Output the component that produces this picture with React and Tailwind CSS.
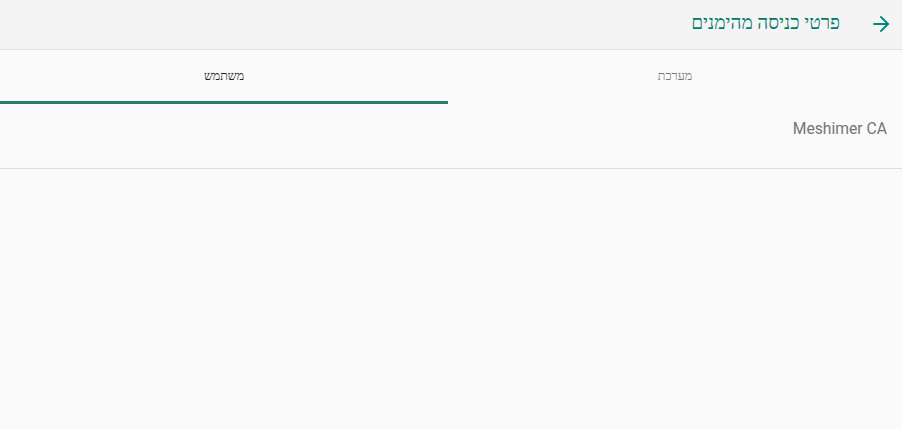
import { ArrowRight } from "lucide-react";

export default function App() {
  return (
    <div dir="rtl" className="w-[902px] h-[429px] bg-[#fafafa] overflow-hidden" style={{ fontFamily: "Roboto, system-ui" }}>
      <header className="h-[50px] bg-[#f4f4f4] border-b border-[#e2e2e2] flex items-center pr-[9px]">
        <button className="text-[#00897b] w-[24px] flex justify-center pb-[1px]">
          <ArrowRight size={24} strokeWidth={1.8} />
        </button>
        <h1 className="mr-[29px] text-[19px] text-[#00796b] pb-[2px]">פרטי כניסה מהימנים</h1>
      </header>

      <nav className="flex h-[54px]">
        <div className="w-[454px] flex items-center justify-center text-[12.5px] text-[#777] pb-[2px]">מערכת</div>
        <div className="flex-1 flex items-center justify-center text-[12.5px] text-[#222] border-b-[3px] border-[#2a7d6b] pt-[1px]">משתמש</div>
      </nav>

      <div className="h-[65px] border-b border-[#dcdcdc] flex items-start px-[15px] pt-[13px]">
        <span dir="ltr" className="text-[15.7px] text-[#757575]">Meshimer CA</span>
      </div>
    </div>
  );
}
